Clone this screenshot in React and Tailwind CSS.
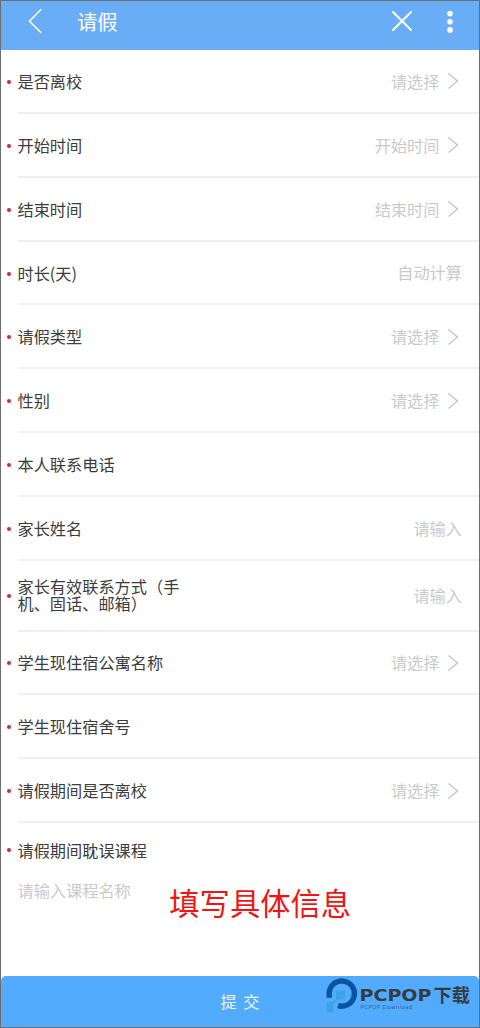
import React from 'react';

const FIELDS = [
  { label: '是否离校', hint: '请选择', arrow: true },
  { label: '开始时间', hint: '开始时间', arrow: true },
  { label: '结束时间', hint: '结束时间', arrow: true },
  { label: '时长(天)', hint: '自动计算' },
  { label: '请假类型', hint: '请选择', arrow: true },
  { label: '性别', hint: '请选择', arrow: true },
  { label: '本人联系电话' },
  { label: '家长姓名', hint: '请输入' },
  { label: '家长有效联系方式（手机、固话、邮箱）', hint: '请输入', tall: true },
  { label: '学生现住宿公寓名称', hint: '请选择', arrow: true },
  { label: '学生现住宿舍号' },
  { label: '请假期间是否离校', hint: '请选择', arrow: true },
];

function RequiredDot() {
  return <span className="ml-[6px] mr-[6.5px] size-1 shrink-0 rounded-full bg-[#d9282b]" />;
}

function Field({ label, hint, arrow, tall }) {
  return (
    <div className={`flex shrink-0 items-stretch ${tall ? 'h-[70.7px]' : 'h-[63.87px]'}`}>
      <div className="flex items-center">
        <RequiredDot />
      </div>
      <div className="flex flex-1 items-center justify-between border-b-2 border-[#f0f0f0]">
        <span className={`w-[166px] text-[#3c3c3c] ${tall ? 'leading-[17px]' : 'leading-6'}`}>{label}</span>
        <span className={`flex items-center text-[#cacaca] ${arrow ? 'pr-[20px]' : 'pr-[17px]'}`}>
          {hint}
          {arrow && (
            <svg className="ml-[7.5px] mt-px h-[18px] w-3" viewBox="0 0 12 18" fill="none" stroke="#c6c6c6" strokeWidth="1.4">
              <path d="M1.5 1.5 L10.5 9 L1.5 16.5" />
            </svg>
          )}
        </span>
      </div>
    </div>
  );
}

function Header() {
  return (
    <div className="flex h-[49px] shrink-0 items-start bg-[#6aadf7] text-white">
      <svg className="ml-[26px] mt-[7px] h-[26px] w-4" viewBox="0 0 16 26" fill="none" stroke="currentColor" strokeWidth="1.5">
        <path d="M14.2 1.2 L2.5 13.2 L14.2 24.8" />
      </svg>
      <h1 className="ml-[34px] mt-[4px] text-[20.3px] leading-8">请假</h1>
      <div className="ml-auto flex">
        <svg className="mt-[9px] size-[22px]" viewBox="0 0 22 22" fill="none" stroke="currentColor" strokeWidth="2" strokeLinecap="round">
          <path d="M2 2 L20 20 M20 2 L2 20" />
        </svg>
        <svg className="ml-8 mr-[24px] mt-[8px] h-6 w-[10px]" viewBox="0 0 10 24" fill="currentColor">
          <circle cx="5" cy="4.6" r="2.8" />
          <circle cx="5" cy="12.8" r="2.8" />
          <circle cx="5" cy="20.9" r="2.8" />
        </svg>
      </div>
    </div>
  );
}

function Watermark() {
  return (
    <svg className="absolute right-[7px] top-0 h-[38px] w-[148px]" viewBox="0 0 148 38">
      <path d="M5.2 21.8 V17.3 A12.6 12.6 0 1 1 14 29.6" fill="none" stroke="#07559e" strokeWidth="5.4" />
      <path d="M12 14.7 H21 V23.5 H14 L9.3 28 V36.3 H2.7 V26 H8.5 L12 23 Z" fill="#3aa5e4" />
      <text x="35.5" y="25" fontSize="16.5" fontWeight="700" textLength="72" lengthAdjust="spacingAndGlyphs" fill="#363c44" fontFamily="DejaVu Sans, sans-serif">PCPOP</text>
      <text x="109.5" y="25.5" fontSize="18.2" fontWeight="700" fill="#363c44">下载</text>
      <text x="36.5" y="33" fontSize="5.5" textLength="52" fill="#36658f" fontFamily="DejaVu Sans, sans-serif">PCPOP Download</text>
    </svg>
  );
}

export default function App() {
  return (
    <div className="flex h-[1028px] w-[480px] flex-col overflow-hidden border border-[#6d6d6d] bg-white font-['Noto_Sans_CJK_SC',sans-serif] text-[16.2px]">
      <Header />

      {FIELDS.map((field) => (
        <Field key={field.label} {...field} />
      ))}

      {/* 耽误课程 */}
      <div className="flex flex-1 flex-col pt-[15px]">
        <div className="flex items-center leading-6 text-[#3c3c3c]">
          <RequiredDot />
          请假期间耽误课程
        </div>
        <div className="flex items-start pl-[16.5px] pt-4">
          <span className="leading-6 text-[#cacaca]">请输入课程名称</span>
          <span className="ml-[38.5px] mt-[4px] text-[30.3px] leading-10 text-[#f01414]">填写具体信息</span>
        </div>
      </div>

      <div className="relative flex h-[51px] shrink-0 items-center justify-center rounded-t-[5px] bg-[#52abfd] text-[#e9f5ff]">
        <span className="[word-spacing:3px]">提 交</span>
        <Watermark />
      </div>
    </div>
  );
}
